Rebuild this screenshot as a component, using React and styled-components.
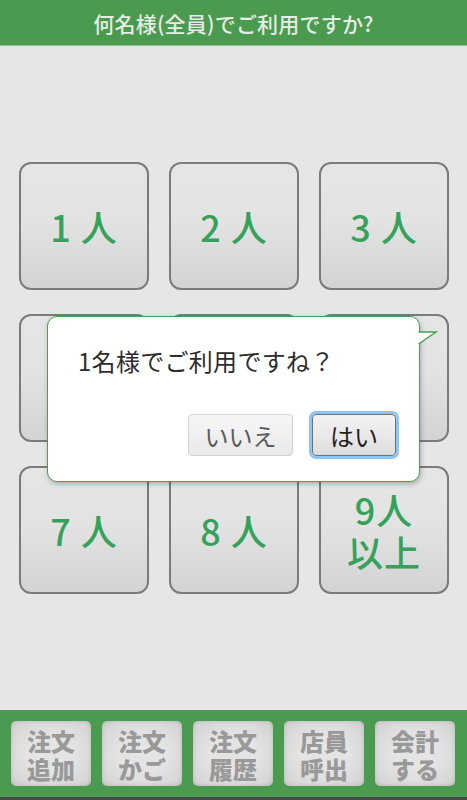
import React from 'react'
import styled, { createGlobalStyle } from 'styled-components'

const GlobalStyle = createGlobalStyle`
    html, body {
        margin: 0;
        padding: 0;
        background: #e6e6e6;
    }
    body {
        font-family: "Noto Sans CJK JP", "Noto Sans", sans-serif;
    }
`

const Screen = styled.div`
    position: relative;
    width: 467px;
    height: 800px;
    display: flex;
    flex-direction: column;
    background: #e6e6e6;
    overflow: hidden;
`

const Header = styled.div`
    height: 46px;
    flex: none;
    display: flex;
    align-items: center;
    justify-content: center;
    background: #4a9a4f;
    border-bottom: 1px solid #8cc58f;
    box-sizing: border-box;
    color: #e6ece6;
    font-size: 21px;
    font-weight: 500;
    letter-spacing: 0.2px;
`

const Main = styled.div`
    flex: 1;
    display: flex;
    align-items: center;
    padding: 0 18px 0 19px;
`

const Grid = styled.div`
    display: grid;
    grid-template-columns: repeat(3, 130px);
    grid-auto-rows: 128px;
    column-gap: 20px;
    row-gap: 24px;
`

const PeopleButton = styled.button`
    box-sizing: border-box;
    border: 2px solid #7b7b7b;
    border-radius: 12px;
    background: linear-gradient(to bottom, #e5e5e5 0%, #e3e3e3 45%, #d3d3d3 100%);
    color: #35a25c;
    font-family: "Noto Sans CJK JP", sans-serif;
    font-size: 36px;
    font-weight: 500;
    line-height: ${(p) => (p.$small ? '42px' : '1')};
    letter-spacing: 1px;
    display: flex;
    align-items: center;
    justify-content: center;
    text-align: center;
    padding: 0;
`

const Footer = styled.div`
    flex: none;
    height: 90px;
    box-sizing: border-box;
    background: #4a9a4f;
    display: flex;
    gap: 11px;
    padding: 11px 12px 0 11px;
    border-bottom: 3px solid #474747;
`

const FooterButton = styled.button`
    width: 80px;
    height: 65px;
    box-sizing: border-box;
    border: none;
    border-radius: 5px;
    background: radial-gradient(ellipse at center, #e4e4e4 40%, #d6d6d6 85%, #cbcbcb 100%);
    box-shadow: inset 0 0 4px rgba(0, 0, 0, 0.15);
    color: #999999;
    font-family: "Noto Sans CJK JP", sans-serif;
    font-size: 24px;
    font-weight: 900;
    line-height: 28px;
    padding: 2px 0 0;
    display: flex;
    flex-direction: column;
    align-items: center;
    justify-content: center;
`

const Dialog = styled.div`
    position: absolute;
    left: 47px;
    top: 316px;
    width: 373px;
    height: 166px;
    box-sizing: border-box;
    background: #ffffff;
    border: 1.5px solid #4c9f51;
    border-radius: 10px;
    box-shadow: 1px 2px 5px rgba(0, 0, 0, 0.25);
    padding: 28px 23px 25px 30px;
    display: flex;
    flex-direction: column;
    justify-content: space-between;
`

const Tail = styled.svg`
    position: absolute;
    right: -19px;
    top: 13px;
    overflow: visible;
`

const Message = styled.div`
    font-size: 24px;
    color: #2c2c2c;
    line-height: 32px;
    letter-spacing: 0.3px;
`

const Actions = styled.div`
    display: flex;
    justify-content: flex-end;
    align-items: center;
    gap: 19px;
`

const DialogButton = styled.button`
    box-sizing: border-box;
    height: 42px;
    width: ${(p) => (p.$primary ? '84px' : '105px')};
    border-radius: 4px;
    border: ${(p) => (p.$primary ? '1.5px solid #6f6f6f' : '1px solid #d2d2d2')};
    box-shadow: ${(p) => (p.$primary ? '0 0 0 3px #8ec5f7' : 'none')};
    background: ${(p) =>
        p.$primary
            ? 'linear-gradient(to bottom, #f2f2f2 0%, #eaeaea 50%, #dcdcdc 100%)'
            : 'linear-gradient(to bottom, #f6f6f6 0%, #f0f0f0 50%, #e9e9e9 100%)'};
    color: ${(p) => (p.$primary ? '#222' : '#5a5a5a')};
    font-family: "Noto Sans CJK JP", sans-serif;
    font-size: 24px;
    padding: 0;
    display: flex;
    align-items: center;
    justify-content: center;
`

const people = ['1 人', '2 人', '3 人', '4 人', '5 人', '6 人', '7 人', '8 人']
const menu = [
    ['注文', '追加'],
    ['注文', 'かご'],
    ['注文', '履歴'],
    ['店員', '呼出'],
    ['会計', 'する'],
]

export default function App() {
    return (
        <>
            <GlobalStyle />
            <Screen>
                <Header>何名様(全員)でご利用ですか?</Header>
                <Main>
                    <Grid>
                        {people.map((label) => (
                            <PeopleButton key={label}>{label}</PeopleButton>
                        ))}
                        <PeopleButton $small>
                            9人
                            <br />
                            以上
                        </PeopleButton>
                    </Grid>
                </Main>
                <Footer>
                    {menu.map(([a, b]) => (
                        <FooterButton key={a + b}>
                            <span>{a}</span>
                            <span>{b}</span>
                        </FooterButton>
                    ))}
                </Footer>
                <Dialog>
                    <Tail width="20" height="16" viewBox="0 0 20 16">
                        <path d="M0 2 L18 2 L0 14 Z" fill="#ffffff" />
                        <path d="M0.5 2 L18 2 L0.5 14" fill="none" stroke="#4c9f51" strokeWidth="1.5" />
                    </Tail>
                    <Message>1名様でご利用ですね？</Message>
                    <Actions>
                        <DialogButton>いいえ</DialogButton>
                        <DialogButton $primary>はい</DialogButton>
                    </Actions>
                </Dialog>
            </Screen>
        </>
    )
}
